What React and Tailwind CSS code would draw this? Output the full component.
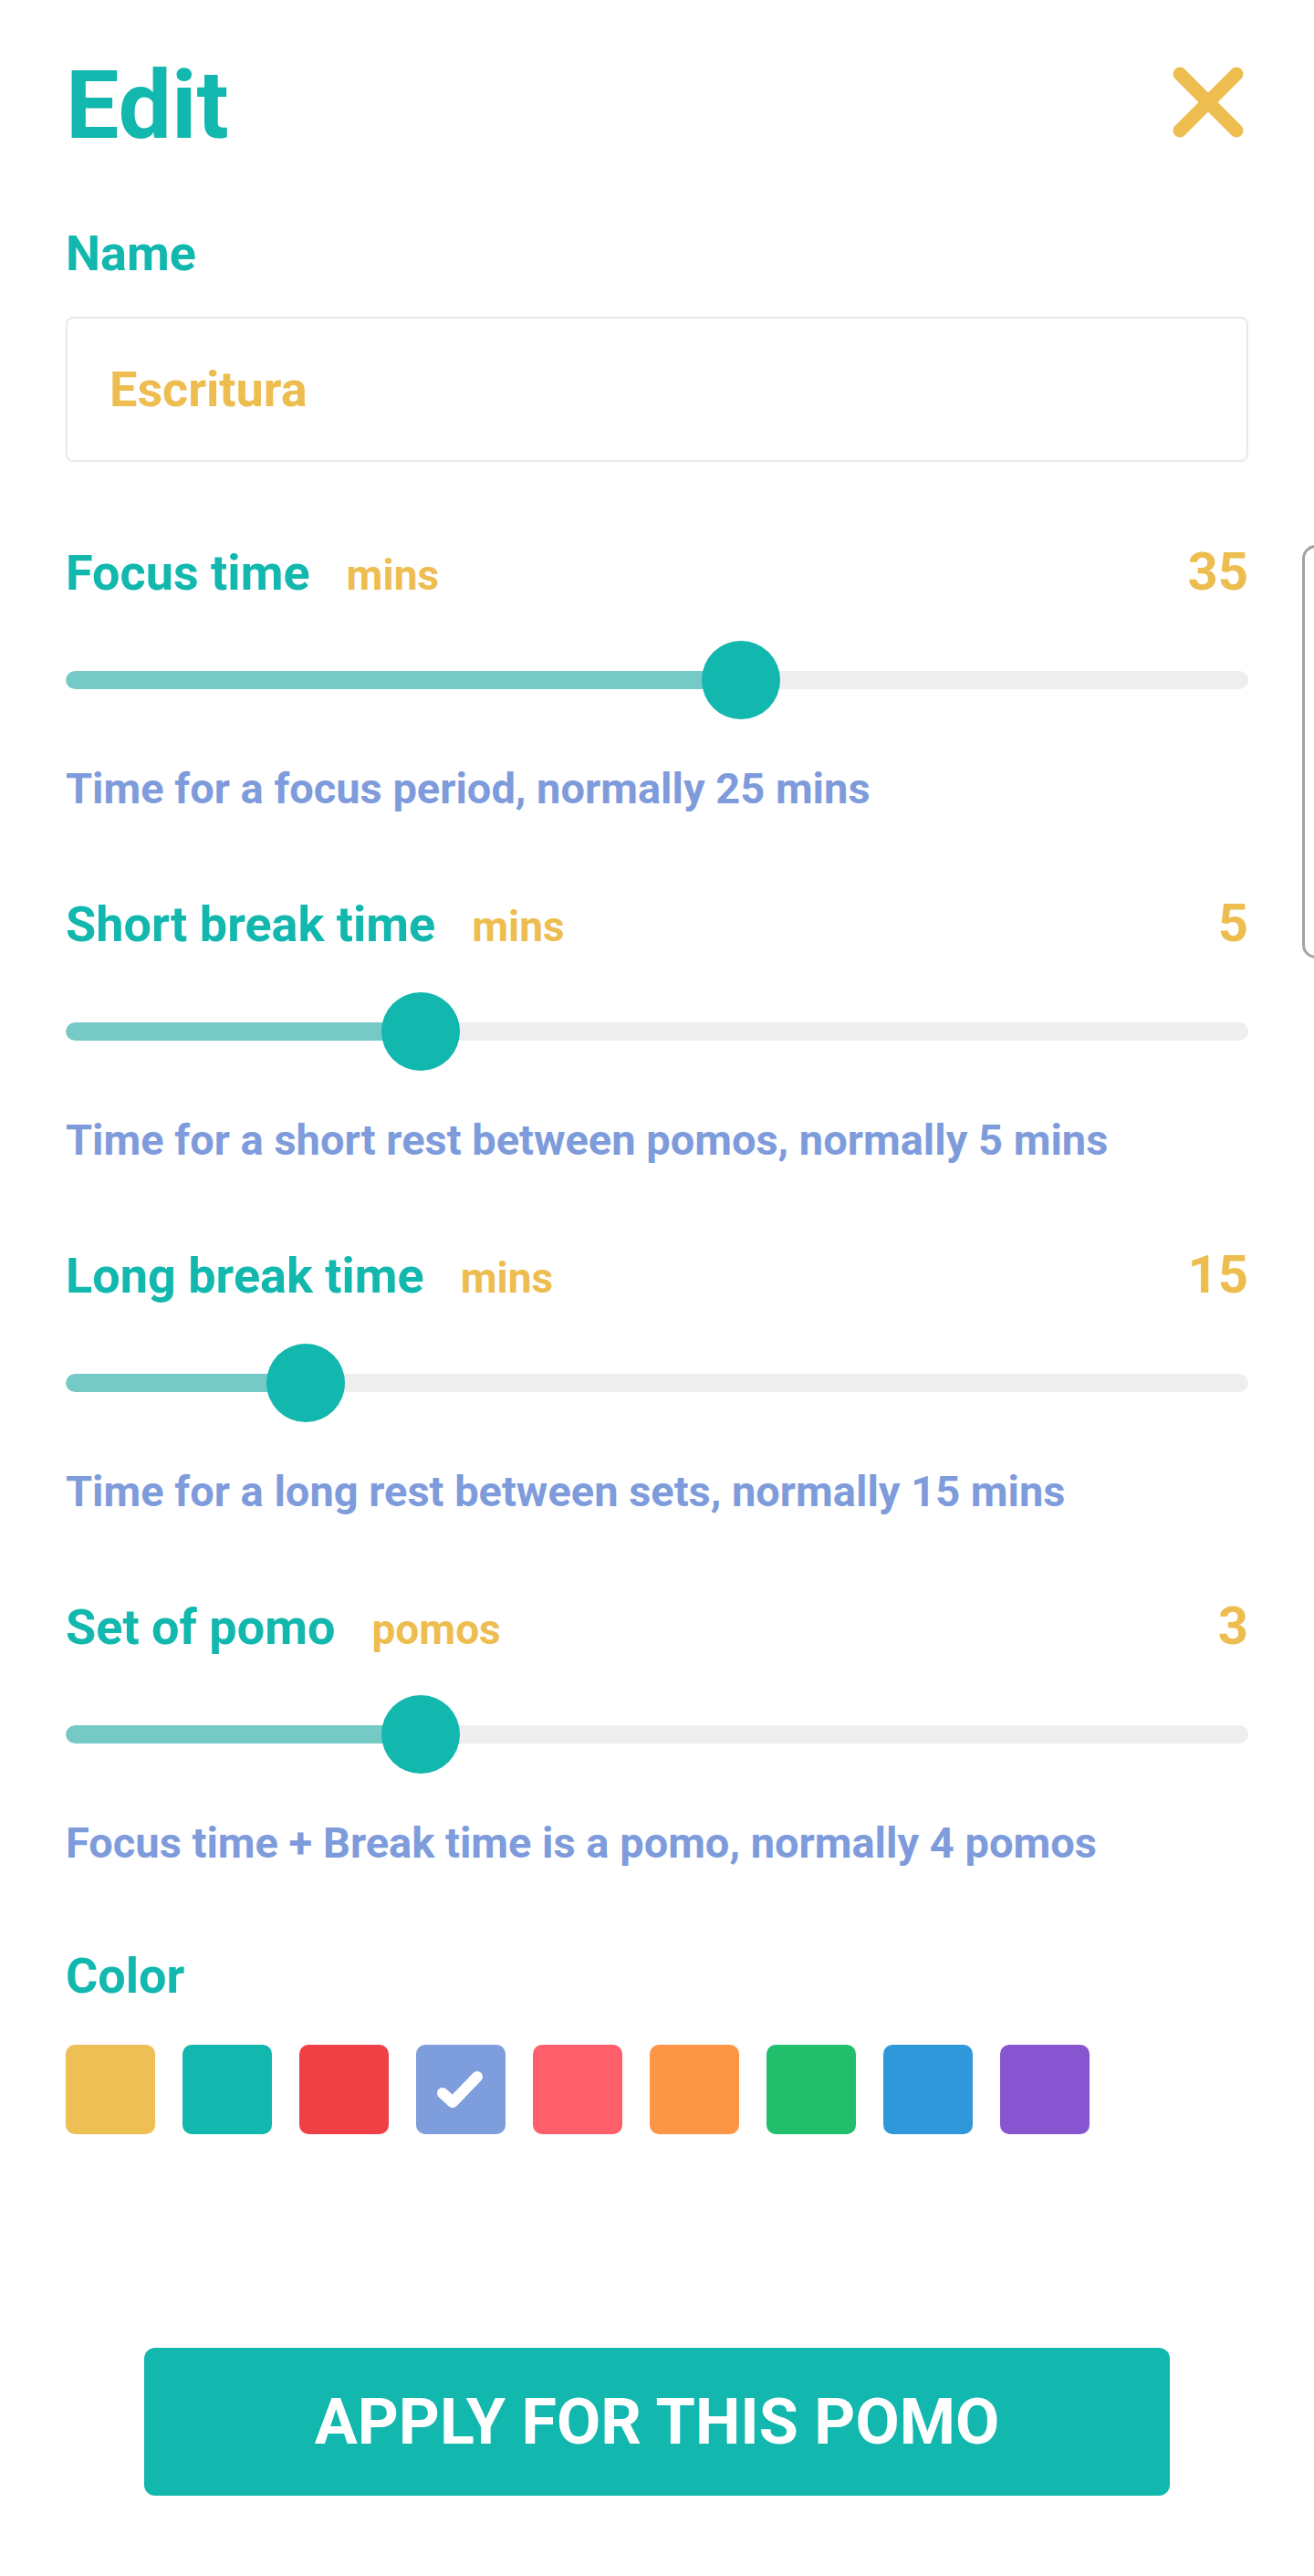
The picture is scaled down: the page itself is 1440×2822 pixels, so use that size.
import React from 'react';

const TEAL = 'text-[#12B7AE]';

const sliders = [
    { title: 'Focus time', unit: 'mins', value: 35, min: 1, max: 60, hint: 'Time for a focus period, normally 25 mins' },
    { title: 'Short break time', unit: 'mins', value: 5, min: 1, max: 15, hint: 'Time for a short rest between pomos, normally 5 mins' },
    { title: 'Long break time', unit: 'mins', value: 15, min: 5, max: 60, hint: 'Time for a long rest between sets, normally 15 mins' },
    { title: 'Set of pomo', unit: 'pomos', value: 3, min: 1, max: 8, hint: 'Focus time + Break time is a pomo, normally 4 pomos' },
];

const swatches = ['#EDBF55', '#12B7AE', '#EE4045', '#7E9DDC', '#FF5F6B', '#FC9646', '#21BE6C', '#2E98DA', '#8855D0'];

// thumb is 86px wide, track is 1296px, so the thumb centre travels 1210px
const Slider = ({ value, min, max }) => {
    const center = 43 + ((value - min) / (max - min)) * 1210;
    return (
        <div className="relative mt-[45px] flex h-[86px] items-center">
            <div className="relative h-[20px] w-full overflow-hidden rounded-full bg-[#EEEEEE]">
                <div className="h-full rounded-l-full bg-[#75CAC6]" style={{ width: center }} />
            </div>
            <div
                className="absolute top-0 h-[86px] w-[86px] rounded-full bg-[#12B7AE]"
                style={{ left: center - 43 }}
            />
        </div>
    );
};

const App = () => {
    return (
        <div className="relative min-h-[2822px] overflow-hidden bg-white px-[72px] pt-[64px] font-['Roboto',sans-serif] font-bold">
            {/* header */}
            <div className="flex items-start justify-between">
                <h1 className={`text-[104px] leading-none font-bold ${TEAL}`}>Edit</h1>
                <svg width="78" height="78" viewBox="0 0 78 78" className="mt-[9px] mr-[5px]">
                    <path d="M8 8 L70 70 M70 8 L8 70" stroke="#EDBD50" strokeWidth="15" strokeLinecap="round" fill="none" />
                </svg>
            </div>

            <div className={`mt-[83px] text-[54px] leading-none ${TEAL}`}>Name</div>
            <div className="mt-[42px] flex h-[159px] items-center rounded-[8px] border-2 border-[#E9E9E9] pl-[46px] text-[54px] leading-none text-[#EDBD50]">
                Escritura
            </div>

            {sliders.map((s, i) => (
                <div key={s.title} className={i === 0 ? 'mt-[93px]' : 'mt-[97px]'}>
                    <div className="flex items-baseline leading-[54px]">
                        <span className={`text-[54px] ${TEAL}`}>{s.title}</span>
                        <span className="ml-[40px] text-[46px] text-[#EDBD50]">{s.unit}</span>
                        <span className="ml-auto text-[58px] text-[#EDBD50]">{s.value}</span>
                    </div>
                    <Slider value={s.value} min={s.min} max={s.max} />
                    <div className="mt-[52px] text-[47px] leading-none text-[#7E9BDB]">{s.hint}</div>
                </div>
            ))}

            <div className={`mt-[96px] text-[54px] leading-none ${TEAL}`}>Color</div>
            <div className="mt-[48px] flex gap-[30px]">
                {swatches.map((c, i) => (
                    <div key={c} className="h-[98px] w-[98px] rounded-[10px]" style={{ backgroundColor: c }}>
                        {i === 3 && (
                            <svg width="98" height="98" viewBox="0 0 98 98">
                                <path d="M29 53 L40 63 L67 35" stroke="#FFFFFF" strokeWidth="12" strokeLinecap="round" strokeLinejoin="round" fill="none" />
                            </svg>
                        )}
                    </div>
                ))}
            </div>

            <button className="mx-auto mt-[234px] flex h-[162px] w-[1124px] items-center justify-center rounded-[12px] bg-[#12B7AE] text-[70px] leading-none font-bold text-white">
                APPLY FOR THIS POMO
            </button>

            {/* scroll indicator on the right edge */}
            <div className="absolute top-[597px] left-[1427px] h-[453px] w-[30px] rounded-[16px] border-[3px] border-[#A3A3A3]" />
        </div>
    );
};

export default App;
